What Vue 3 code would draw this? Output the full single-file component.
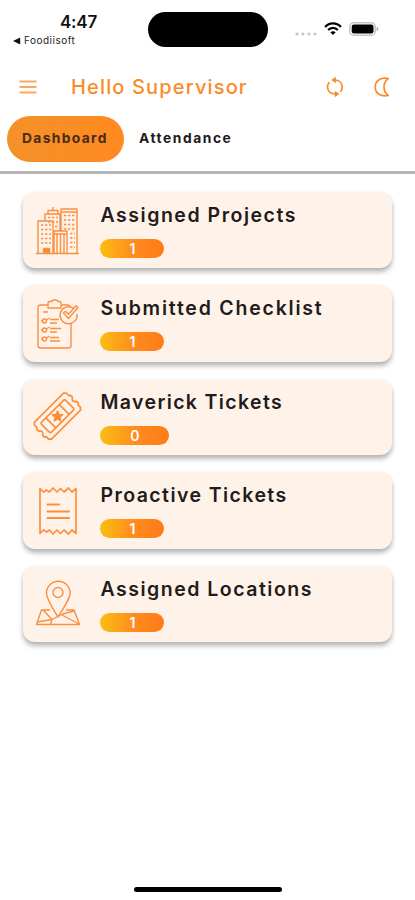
<script setup>
const cards = [
  { title: 'Assigned Projects', count: 1, icon: 'buildings' },
  { title: 'Submitted Checklist', count: 1, icon: 'checklist' },
  { title: 'Maverick Tickets', count: 0, icon: 'ticket' },
  { title: 'Proactive Tickets', count: 1, icon: 'receipt' },
  { title: 'Assigned Locations', count: 1, icon: 'location' },
]
</script>

<template>
  <div class="screen">
    <header class="status">
      <div class="clock">
        <div class="time">4:47</div>
        <div class="back">
          <svg width="8" height="8" viewBox="0 0 8 8"><path d="M0 4 7.2.6v6.8z" fill="#111" /></svg>
          <span>Foodiisoft</span>
        </div>
      </div>
      <div class="island"></div>
      <div class="signals">
        <svg class="dots" width="22" height="4" viewBox="0 0 22 4" fill="#c6c6c6">
          <circle cx="2" cy="2" r="1.6" /><circle cx="8" cy="2" r="1.6" /><circle cx="14" cy="2" r="1.6" /><circle cx="20" cy="2" r="1.6" />
        </svg>
        <svg class="wifi" width="18" height="14" viewBox="0 0 20 15" fill="none" stroke="#000" stroke-width="2.5">
          <path d="M1.2 5.2C6-.2 14-.2 18.8 5.2M4.6 8.6c3-3.2 7.8-3.2 10.8 0" />
          <path d="M7 11.2c1.7-1.6 4.3-1.6 6 0l-3 3z" fill="#000" stroke="none" />
        </svg>
        <svg class="battery" width="30" height="14" viewBox="0 0 30 14">
          <rect x=".8" y=".8" width="25.4" height="12.4" rx="4" fill="#fff" stroke="#c6c6c6" stroke-width="1.6" />
          <rect x="2.7" y="2.6" width="21.8" height="8.8" rx="2.2" />
          <path d="M27.6 4.8c2.4.8 2.4 3.6 0 4.4z" fill="#aaa" />
        </svg>
      </div>
    </header>

    <div class="appbar">
      <svg class="menu" width="18" height="14" viewBox="0 0 18 14" stroke="#fca661" stroke-width="2">
        <path d="M.5 1.5h17M.5 7h17M.5 12.5h17" />
      </svg>
      <h1>Hello Supervisor</h1>
      <svg class="sync" width="18" height="22" viewBox="0 0 18 22" fill="none" stroke="#fb8a27" stroke-width="1.7">
        <path d="M3.8 16.2A7 7 0 0 1 3.4 6.200M8.500 4c4.800 0 7.700 3 7.700 7 0 1.800-.5 3.400-1.600 4.700M9.500 18c-2.200 0-4.200-.6-5.700-1.800" />
        <path d="M9.800.8v6.400L5.200 4zM8.800 14.800v6.400l4.600-3.200z" fill="#fb8a27" stroke="none" />
      </svg>
      <svg class="moon" width="16" height="20" viewBox="0 0 16 20" fill="none" stroke="#fb8a27" stroke-width="1.7" stroke-linejoin="round">
        <path d="M14.2 1.600C7-.2 1.200 3.700 1.200 10s5.800 10.200 13 8.400C8.600 14.400 8.600 5.600 14.200 1.600z" />
      </svg>
    </div>

    <nav class="tabs">
      <div class="tab active">Dashboard</div>
      <div class="tab attendance">Attendance</div>
    </nav>

    <main>
      <section v-for="card in cards" :key="card.title" class="card">
        <svg v-if="card.icon === 'buildings'" class="icon" viewBox="0 0 50 50">
          <path d="M2 48.500h43M4 48V16h15v32M11 16V9h15v17M14 9V5.500h10V9M19 5V2M27 26V4h16v44M20 48V26h13v22M23 48V29.500M26.500 48V29.500M30 48V29.500M20 29h13M27 7h16" />
          <path d="M7 20h10M7 24.500h10M7 29h10M7 33.500h10M7 38h10M14 12.500h10M14 17h10M21 21.500h4M30 10.500h11M30 15h11M30 19.500h11M30 24h11M36 28.500h5M36 33h5M36 37.500h5M36 42h5" stroke-dasharray="2.400 1.600" stroke-width="1.300" />
          <path d="M9.500 48v-4.500h6V48z" fill="#fb8a27" />
        </svg>
        <svg v-else-if="card.icon === 'checklist'" class="icon" viewBox="0 0 50 50">
          <path d="M14 6H6.500Q4 6 4 8.500v38Q4 49 6.500 49h28q2.500 0 2.500-2.500V25M27 6h7q2 0 2.500 2" />
          <path d="M14 9V4q0-1.500 2-1.500h2q0-1.500 2-1.500h2q1.500 0 2 1.500h1.500Q27 2.500 27 4v5zM9 13h5" />
          <path d="M39.500 9.300A8.500 8.500 0 1 0 43 15M29.500 14l5 5.500L44 8.500l-2-1.700-7.500 8.500-3-3z" />
          <g v-for="y in [22, 31, 40]" :key="y" :transform="`translate(0 ${y})`">
            <circle cx="10.500" cy="0" r="2" /><path d="M7 0h1.500M12.500-1l3-2M16-1.500h9M16 2h7" />
          </g>
          <path d="M25 29.500h2M23 42h3" />
        </svg>
        <svg v-else-if="card.icon === 'ticket'" class="icon" viewBox="0 0 50 50">
          <g transform="translate(23.500 24.200) rotate(-45)" stroke-width="1.700">
            <path d="M-20.500-12h41l2 2v3.500l1.500 1v2.500q-4.500 3 0 6v2.500l-1.500 1V10l-2 2h-41l-2-2V6.500l-1.500-1V3q4.500-3 0-6v-2.500l1.500-1V-10z" />
            <path d="M-15.500-7h31q1.500 0 1.500 1.500v11q0 1.500-1.500 1.500h-31q-1.500 0-1.500-1.500v-11q0-1.500 1.500-1.500zM-9.500-7V7M9.500-7V7" />
          </g>
          <path d="m23.500 19 1.500 3.400 3.700.3-2.800 2.500.8 3.700-3.200-2-3.200 2 .8-3.700-2.800-2.500 3.700-.3z" fill="#fb8a27" />
        </svg>
        <svg v-else-if="card.icon === 'receipt'" class="icon" viewBox="0 0 50 50">
          <path d="M6 2.500 9.500 6l3-2 3 2 3.500-4 4 4 3.500-3.500L30 6l4.500-4L38 6l4-3.500v45L38 44l-3.500 4-4.500-4-3.500 3.500-3.500-3.500-4 4-3.500-4-3 2-3-2L6 47.500z" stroke-width="1.700" />
          <path d="M13.500 18.500H25M13.500 25.500H35M13.500 32H35" stroke-width="2.100" stroke-linecap="round" />
        </svg>
        <svg v-else class="icon" viewBox="0 0 50 50">
          <path d="M24 38C17 27 12.500 19 12.500 14a11.800 11.800 0 0 1 23.600 0C36.100 19 31 27 24 38z" />
          <circle cx="24" cy="13.500" r="5" />
          <path d="M16 31H7.500L2.500 45.500h43L40 31h-8M9 31l9 9.500M3 43l15-2.500 10.500-5.500L40 32M18 40.500l-1.500 5M28 36l17 9" />
        </svg>
        <div class="info">
          <h2 :class="card.icon">{{ card.title }}</h2>
          <div class="pill" :class="{ wide: card.count === 0 }">{{ card.count }}</div>
        </div>
      </section>
    </main>
    <div class="home"></div>
  </div>
</template>

<style>
body { margin: 0; background: #fff; }
</style>

<style scoped>
.screen { box-sizing: border-box; width: 415px; height: 900px; display: flex; flex-direction: column; overflow: hidden; background: #fff; font-family: Inter, "Liberation Sans", sans-serif; color: #231b1b; }
.status { display: flex; height: 60px; align-items: flex-start; flex: none; }
.clock { width: 148px; padding-top: 12px; box-sizing: border-box; }
.time { font-size: 17px; line-height: 21px; font-weight: 600; padding-left: 60px; letter-spacing: -.2px; color: #111; }
.back { display: flex; align-items: center; gap: 3px; padding-left: 13px; font-size: 10px; line-height: 15px; letter-spacing: .5px; color: #222; }
.island { width: 120px; height: 35px; margin-top: 12px; border-radius: 18px; background: #000; }
.signals { display: flex; align-items: center; padding: 22px 0 0 27px; }
.dots { margin-top: 9px; }
.wifi { margin-left: 7px; }
.battery { margin-left: 7px; }
.appbar { display: flex; height: 54px; align-items: center; padding: 0 24px 0 19px; flex: none; }
h1 { margin: 0 0 0 34px; width: 222px; font-size: 20px; line-height: 26px; font-weight: 500; letter-spacing: 1.15px; color: #f98b2b; white-space: nowrap; }
.sync { margin-left: 33px; }
.moon { margin-left: 30px; }
.menu, .sync, .moon { flex: none; }
.tabs { display: flex; height: 60px; box-sizing: border-box; padding: 2px 7px 0; border-bottom: 3px solid #b5b5b7; flex: none; }
.tab { box-sizing: border-box; height: 46px; padding: 0 15px; border-radius: 23px; font-size: 13.8px; line-height: 44px; font-weight: 700; letter-spacing: 1.35px; white-space: nowrap; }
.attendance { letter-spacing: 1.55px; }
.active { width: 117px; background: linear-gradient(90deg, #f39229, #ff8a20); color: #4b2a16; }
main { display: flex; flex-direction: column; gap: 17px; padding: 17.5px 23px 0; }
.card { display: flex; box-sizing: border-box; height: 76.6px; padding: 12px 10px; border-radius: 12px; background: #fff3e9; box-shadow: 0 4px 5px rgba(0, 0, 0, .27), 0 1px 4px rgba(0, 0, 0, .06); }
.icon { width: 50px; height: 50px; flex: none; margin: 1.500px 0 0 .7px; fill: none; stroke: #fb8f40; stroke-width: 1.4; stroke-linejoin: round; overflow: visible; }
.info { margin-left: 16.800px; }
h2 { margin: -2px 0 0; font-size: 19.5px; line-height: 27px; font-weight: 600; white-space: nowrap; }
.buildings { letter-spacing: 1.53px; }
.checklist { letter-spacing: 1.78px; }
h2.ticket { letter-spacing: 1.36px; }
h2.receipt { letter-spacing: 1.42px; }
h2.location { letter-spacing: 1.5px; }
.pill { width: 64px; height: 19px; margin-top: 10px; border-radius: 10px; background: linear-gradient(90deg, #fcbd12, #ff8a1e 55%, #ff7b18); color: #fff; font-size: 14px; line-height: 19px; font-weight: 600; text-align: center; }
.wide { width: 69px; }
.home { width: 148px; height: 5px; margin: auto auto 8px 134px; border-radius: 3px; background: #000; }
</style>
